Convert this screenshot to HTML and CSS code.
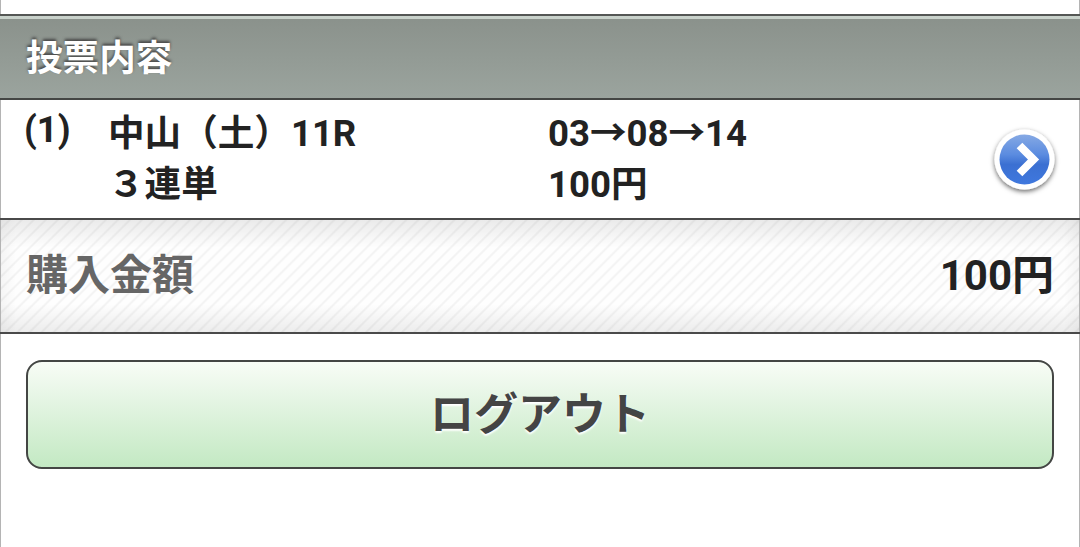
FILE: index.html
```html
<!DOCTYPE html>
<html lang="ja">

<head>
    <meta charset="UTF-8">
    <meta name="viewport" content="width=device-width, initial-scale=1.0">
    <title>投票内容</title>
    <link rel="stylesheet" href="styles.css">
</head>

<body>
    <div class="container">
        <h1 class="heading">投票内容</h1>

        <div class="bet">
            <div class="bet-no">(1)</div>
            <div class="bet-race">
                <div>中山（土）11R</div>
                <div>３連単</div>
            </div>
            <div class="bet-numbers">
                <div>03→08→14</div>
                <div>100円</div>
            </div>
            <svg class="bet-arrow" width="76" height="76" viewBox="0 0 76 76">
                <defs>
                    <linearGradient id="blue" x1="0" y1="0" x2="0" y2="1">
                        <stop offset="0" stop-color="#86a9e4" />
                        <stop offset="0.4" stop-color="#5b8ce0" />
                        <stop offset="0.6" stop-color="#3b70d2" />
                        <stop offset="1" stop-color="#3f78de" />
                    </linearGradient>
                    <filter id="shadow" x="-20%" y="-20%" width="140%" height="140%">
                        <feDropShadow dx="0" dy="2" stdDeviation="2.6" flood-color="#000" flood-opacity="0.6" />
                    </filter>
                </defs>
                <circle cx="37.5" cy="37.5" r="30" fill="#fff" filter="url(#shadow)" />
                <circle cx="37.5" cy="37.5" r="25" fill="url(#blue)" />
                <path d="M32.5 23.5 L46.5 37.5 L32.5 51.5" fill="none" stroke="#fff" stroke-width="8" />
            </svg>
        </div>

        <div class="total">
            <span class="total-label">購入金額</span>
            <span class="total-price">100円</span>
        </div>

        <button type="button" class="logout">ログアウト</button>
    </div>
</body>

</html>
```

FILE: styles.css
```css
body {
    font-family: Roboto, "Noto Sans CJK JP", sans-serif;
    font-weight: bold;
    background-color: #ffffff;
    color: #222222;
    margin: 0;
    padding: 0;
}

.container {
    box-sizing: border-box;
    height: 547px;
    padding-top: 14px;
    background: linear-gradient(#b4b4b4, #b4b4b4) left / 1px 100% no-repeat,
        linear-gradient(#b4b4b4, #b4b4b4) right / 1px 100% no-repeat;
}

.heading {
    box-sizing: border-box;
    height: 86px;
    margin: 0;
    padding-left: 26px;
    border-top: 2px solid #555755;
    border-bottom: 2px solid #444644;
    background: linear-gradient(#8a918b, #9ba49e);
    box-shadow: inset 0 3px 0 #c9d2cb;
    color: #ffffff;
    font-size: 36.6px;
    line-height: 86px;
    text-shadow: 0 -2px 3px #444444;
}

.bet {
    box-sizing: border-box;
    display: grid;
    grid-template-columns: 84px 439px 1fr 76px;
    height: 120px;
    padding: 8px 17px 0 25px;
    border-bottom: 2px solid #4a4a4a;
    font-size: 36.6px;
    line-height: 51px;
}

.bet-no {
    margin-left: -1px;
    line-height: 43px;
}

.bet-race {
    margin-left: -1px;
}

.bet-arrow {
    margin-top: 14px;
}

.total {
    box-sizing: border-box;
    display: flex;
    justify-content: space-between;
    height: 114px;
    padding: 0 26px;
    border-bottom: 2px solid #4a4a4a;
    background: linear-gradient(rgba(0, 0, 0, 0.08), rgba(0, 0, 0, 0) 25%, rgba(0, 0, 0, 0) 75%, rgba(0, 0, 0, 0.07)),
        linear-gradient(90deg, rgba(0, 0, 0, 0.04), rgba(0, 0, 0, 0) 16px, rgba(0, 0, 0, 0) calc(100% - 16px), rgba(0, 0, 0, 0.04)),
        repeating-linear-gradient(135deg, #fefefe 0, #fefefe 5px, #f3f3f3 6.5px, #f3f3f3 7px, #fefefe 8.5px);
    box-shadow: inset 1px 0 0 #b4b4b4, inset -1px 0 0 #b4b4b4;
    font-size: 42px;
    line-height: 111px;
}

.total-label {
    color: #666666;
}

.logout {
    display: block;
    box-sizing: border-box;
    width: calc(100% - 52px);
    height: 109px;
    margin: 26px auto 0;
    padding: 0 0 8px;
    border: 2px solid #444644;
    border-radius: 16px;
    background: linear-gradient(#f8fcf6, #c3e9c3);
    color: #444444;
    font-family: inherit;
    font-size: 44px;
    font-weight: bold;
    text-shadow: 0 2px 2px #ffffff;
    cursor: pointer;
}
```
